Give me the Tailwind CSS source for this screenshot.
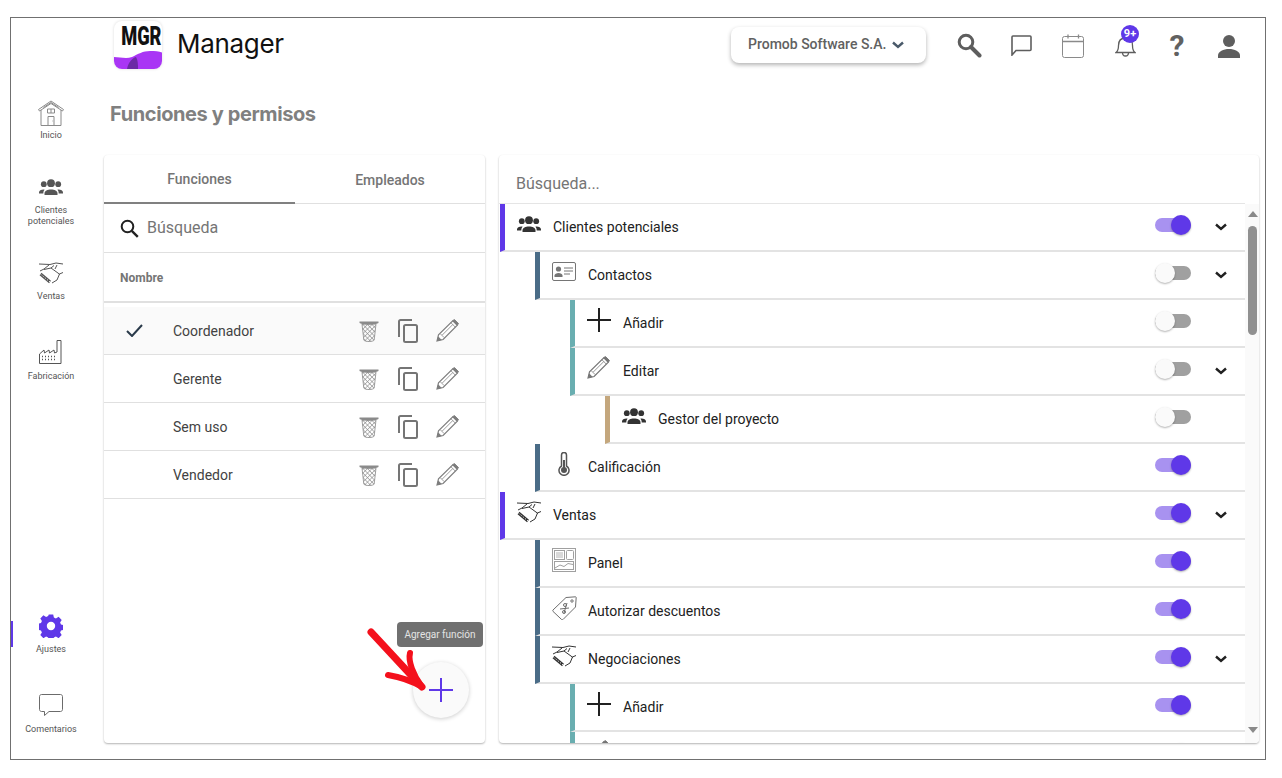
<!DOCTYPE html>
<html lang="es">
<head>
  <meta charset="UTF-8" />
  <title>Manager</title>
  <script src="https://cdn.jsdelivr.net/npm/@tailwindcss/browser@4"></script>
</head>
<body class="bg-white font-['Roboto',sans-serif]">

  <!-- iconos compartidos -->
  <svg class="absolute w-0 h-0">
    <defs>
      <pattern id="mesh" width="3.2" height="3.2" patternUnits="userSpaceOnUse" patternTransform="rotate(45)">
        <path d="M0 0h3.2v3.2" fill="none" stroke="#8a8a8a" stroke-width="1.1"/>
      </pattern>
    </defs>
    <symbol id="i-group" viewBox="0 0 24 16">
      <circle cx="12" cy="4.2" r="3.9" fill="currentColor"/>
      <circle cx="4.8" cy="5.2" r="2.9" fill="currentColor"/>
      <circle cx="19.2" cy="5.2" r="2.9" fill="currentColor"/>
      <path d="M5.5 16v-1.6c0-2.6 3-4 6.5-4s6.500 1.400 6.500 4V16z" fill="currentColor"/>
      <path d="M0 14.500v-.9c0-1.900 2-3 4.600-3 .6 0 .9.100.9.100-.8.900-1.200 2-1.200 3.200v.6zM24 14.500v-.9c0-1.900-2-3-4.600-3-.6 0-.9.100-.9.100.8.900 1.200 2 1.200 3.200v.6z" fill="currentColor"/>
    </symbol>
    <symbol id="i-hands" viewBox="0 0 24 22">
      <g fill="none" stroke="currentColor" stroke-width="1">
        <path d="M0 2 L11 2.500 L17 1 L24 2"/>
        <path d="M10 3 L5 7 L1 9"/>
        <path d="M5 7.500 L12 6 L15 3.500"/>
        <path d="M12 6 L21 12.500"/>
        <path d="M24 10.500 L20.500 12 L18 18 L13 21"/>
        <path d="M18 3 L16 7"/>
      </g>
      <path d="M1.500 12 L11 20" fill="none" stroke="currentColor" stroke-width="3"/>
      <path d="M1.500 12 L11 20" fill="none" stroke="#fff" stroke-width="1" stroke-dasharray="1.200 1.600"/>
    </symbol>
    <symbol id="i-pencil" viewBox="0 0 24 24">
      <path d="M1 23l1.600-6.400L17.500 1.800l4.700 4.700L7.400 21.400z" fill="#fff" stroke="currentColor" stroke-width="1.200"/>
      <path d="M17.500 1.800 19.200 .5 23.500 4.800 22.200 6.500z" fill="currentColor" stroke="currentColor"/>
      <path d="M4.600 15.500l3.900 3.900M15.500 3.800l4.700 4.700M6.500 16.800 17.500 5.800" fill="none" stroke="currentColor" stroke-width=".8"/>
      <path d="M1 23l1.200-5 3.800 3.800z" fill="currentColor"/>
    </symbol>
    <symbol id="i-plus" viewBox="0 0 24 24">
      <path d="M12 0v24M0 12h24" fill="none" stroke="currentColor" stroke-width="2"/>
    </symbol>
    <symbol id="i-trash" viewBox="0 0 20 22">
      <path d="M3 4l1.800 16c.1.800 2.500 1.500 5.200 1.500s5.100-.7 5.200-1.500L17 4z" fill="url(#mesh)" stroke="#8a8a8a" stroke-width=".8"/>
      <path d="M.5 1.500h19V3c-2 1.200-5.500 1.700-9.500 1.700S2.500 4.200.5 3z" fill="currentColor"/>
    </symbol>
    <symbol id="i-copy" viewBox="0 0 20 24">
      <path d="M1 18V2.500C1 1.600 1.600 1 2.500 1H14" fill="none" stroke="currentColor" stroke-width="2"/>
      <rect x="6" y="6" width="13" height="17" rx="1.500" fill="none" stroke="currentColor" stroke-width="2"/>
    </symbol>
    <symbol id="i-chev" viewBox="0 0 12 8">
      <path d="M1 1.500l5 4.500 5-4.500" fill="none" stroke="currentColor" stroke-width="2.400"/>
    </symbol>
  </svg>

  <div class="ml-[10px] mt-[17px] w-[1256px] h-[743px] border border-[#707070] flex overflow-hidden">

    <!-- barra lateral -->
    <aside class="w-[93px] shrink-0 pr-[13px] pt-[80px] pb-[24px] flex flex-col text-[9px] leading-[11px] text-[#555] text-center">
      <a class="flex flex-col items-center mb-[31px]">
        <span class="h-[30px] flex items-center text-[#8a8a8a]">
          <svg width="26" height="26" viewBox="0 0 26 26" fill="none" stroke="currentColor" stroke-width="1">
            <path d="M.5 9.500 13 1l12.500 8.500-1 1.500L13 3.500 1.500 11zM3 10v15.500h20V10"/>
            <path d="M5.500 7.500 13 2.500l7.500 5M9.500 9h7v4h-7zM13 9v4M10 25.500V16.500h6v9M14.500 21h.6"/>
          </svg>
        </span>
        <span class="mt-[2px]">Inicio</span>
      </a>
      <a class="flex flex-col items-center mb-[31px]">
        <span class="h-[30px] flex items-center text-[#555]"><svg width="24" height="16"><use href="#i-group"/></svg></span>
        <span class="mt-[3px]">Clientes<br/>potenciales</span>
      </a>
      <a class="flex flex-col items-center mb-[35px]">
        <span class="h-[30px] flex items-center text-[#555]"><svg width="24" height="22"><use href="#i-hands"/></svg></span>
        <span class="mt-[3px]">Ventas</span>
      </a>
      <a class="flex flex-col items-center">
        <span class="h-[30px] flex items-center text-[#555]">
          <svg width="24" height="24" viewBox="0 0 24 24" fill="none" stroke="currentColor" stroke-width="1">
            <path d="M.5 23.500V14l4.500-4 .5 3 4.500-3 .5 3 4.500-3 .5 3 2.500-1V.5h4v23z"/>
            <path d="M3 16.500h1M6 16.500h1M9 16.500h1M12 16.500h1M15 16.500h1M3 19.500h1M6 19.500h1M9 19.500h1M12 19.500h1M15 19.500h1" stroke-width="1.400"/>
          </svg>
        </span>
        <span class="mt-[4px]">Fabricación</span>
      </a>

      <a class="relative flex flex-col items-center mt-auto mb-[35px]">
        <span class="absolute left-0 top-[10px] w-[2px] h-[26px] bg-[#5f38e8]"></span>
        <span class="h-[30px] flex items-center text-[#5f38e8]">
          <svg width="24" height="24" viewBox="0 0 24 24" fill="currentColor">
            <path fill-rule="evenodd" d="M9.800 .5h4.400l.7 3 2 .9 2.700-1.600 3.100 3.100-1.600 2.700.9 2 3 .7v4.400l-3 .7-.9 2 1.600 2.700-3.100 3.100-2.700-1.600-2 .9-.7 3H9.800l-.7-3-2-.9-2.700 1.600-3.100-3.100 1.600-2.700-.9-2-3-.7V9.800l3-.7.9-2L1.300 4.400l3.100-3.100 2.700 1.600 2-.9zM12 7.800a4.200 4.200 0 1 0 0 8.400 4.200 4.200 0 0 0 0-8.400z"/>
          </svg>
        </span>
        <span class="mt-[3px]">Ajustes</span>
      </a>
      <a class="flex flex-col items-center">
        <span class="h-[30px] flex items-center text-[#6b6b6b]">
          <svg width="24" height="22" viewBox="0 0 24 22" fill="#fff" stroke="currentColor" stroke-width="1">
            <path d="M2.500.5h19c1.100 0 2 .9 2 2v13c0 1.100-.9 2-2 2H10l-4.500 4v-4h-3c-1.100 0-2-.9-2-2v-13c0-1.100.9-2 2-2z"/>
          </svg>
        </span>
        <span class="mt-[4px]">Comentarios</span>
      </a>
    </aside>

    <!-- contenido -->
    <div class="flex-1 min-w-0 flex flex-col pr-[6px] pb-[16px]">

      <header class="h-[54px] shrink-0 flex pl-[10px] pt-[3px]">
        <div class="relative w-[48px] h-[48px] rounded-[8px] bg-white shadow-[0_0_3px_rgba(0,0,0,0.15)] overflow-hidden">
          <div class="pr-[5px] text-center text-[26px] leading-[26px] mt-[2px] font-black text-[#111] scale-x-[0.7]">MGR</div>
          <svg class="absolute left-0 bottom-0" width="48" height="18" viewBox="0 0 48 18">
            <path d="M0 6c6 0 12 2 18 0 6-3 11-6 18-6 5 0 9 0 12 1.500V18H0z" fill="#a935f5"/>
            <path d="M13 18c1-6 5-11 9-12 2 3 2 8 2 12z" fill="#6b2aa5"/>
          </svg>
        </div>
        <div class="ml-[15px] mt-[3px] text-[26px] leading-[40px] text-[#111] font-['Inter',sans-serif] tracking-[-0.3px]">Manager</div>

        <div class="ml-auto mt-[6px] w-[195px] h-[36px] pb-[2px] rounded-[8px] bg-white shadow-[0_2px_4px_rgba(0,0,0,0.3)] flex items-center pl-[17px] text-[#616161] font-medium text-[14px]">
          <span>Promob Software S.A.</span>
          <svg class="ml-[6px] mt-[2px] text-[#4a5a6a]" width="12" height="8"><use href="#i-chev"/></svg>
        </div>

        <div class="flex items-start mt-[12px] pr-[18px]">
          <svg class="ml-[31px]" width="25" height="25" viewBox="0 0 25 25" fill="none">
            <circle cx="9" cy="9" r="6.800" stroke="#5e5e5e" stroke-width="3"/>
            <path d="M14 14l8.500 8.500" stroke="#5e5e5e" stroke-width="4" stroke-linecap="round"/>
          </svg>
          <svg class="ml-[29px] mt-[2px]" width="21" height="21" viewBox="0 0 21 21" fill="none">
            <path d="M2 1h17c.6 0 1 .4 1 1v12.500c0 .6-.4 1-1 1H5L1 20V2c0-.6.4-1 1-1z" stroke="#5e5e5e" stroke-width="1.600"/>
          </svg>
          <svg class="ml-[30px] mt-[1px]" width="23" height="24" viewBox="0 0 23 24" fill="none" stroke="#8a8a8a">
            <rect x=".5" y="2.500" width="21" height="21" rx="2"/>
            <path d="M.5 7.500h21M6 .5v4M16.500 .5v4" stroke-width="1.300"/>
          </svg>
          <div class="relative ml-[30px] w-[21px] h-[24px]">
            <svg class="mt-[1px]" width="21" height="23" viewBox="0 0 21 23" fill="none" stroke="#5e5e5e" stroke-width="1.300">
              <path d="M1 18.500c2-1.500 2.500-3.500 2.500-7C3.500 6.500 6.500 4 10.500 4s7 2.500 7 7.500c0 3.500.5 5.500 2.500 7z"/>
              <path d="M7.500 18.500c0 2.500 1.300 3.500 3 3.500s3-1 3-3.500"/>
            </svg>
            <span class="absolute left-[6px] top-[-8px] w-[18px] h-[18px] rounded-full bg-[#5f38e8] text-white text-[11px] leading-[17px] font-bold text-center">9+</span>
          </div>
          <span class="ml-[33px] w-[16px] text-[#616161] text-[30px] leading-[26px] font-bold text-center">?</span>
          <svg class="ml-[32px] mt-[1px]" width="24" height="24" viewBox="0 0 24 24" fill="#5e5e5e">
            <circle cx="12" cy="7" r="6"/>
            <path d="M1 24v-2.500C1 17.500 6.500 15 12 15s11 2.500 11 6.500V24z"/>
          </svg>
        </div>
      </header>

      <div class="h-[83px] shrink-0 flex items-center pl-[6px]">
        <h1 class="text-[20px] font-bold text-[#808080] font-['Inter',sans-serif] tracking-[-0.4px]">Funciones y permisos</h1>
      </div>

      <div class="flex-1 min-h-0 flex gap-[14px]">

        <!-- funciones -->
        <section class="relative w-[381px] rounded-[4px] bg-white shadow-[0_1px_2px_rgba(0,0,0,0.3)] flex flex-col">
          <div class="flex h-[49px] border-b border-[#e0e0e0] text-[14px] font-medium text-[#757575]">
            <div class="w-[191px] h-[49px] pt-[2px] border-b-2 border-[#808080] flex items-center justify-center">Funciones</div>
            <div class="flex-1 pt-[2px] flex items-center justify-center">Empleados</div>
          </div>
          <div class="h-[49px] border-b border-[#e0e0e0] flex items-center pl-[16px] text-[16px] text-[#757575]">
            <svg width="19" height="19" viewBox="0 0 19 19" fill="none">
              <circle cx="7.500" cy="7.500" r="5.800" stroke="#212121" stroke-width="2"/>
              <path d="M11.800 11.800l6 6" stroke="#212121" stroke-width="2.400"/>
            </svg>
            <span class="ml-[8px]">Búsqueda</span>
          </div>
          <div class="h-[50px] pt-[2px] border-b-2 border-[#e0e0e0] flex items-center pl-[16px] text-[12px] font-bold text-[#757575]">Nombre</div>

          <div class="mt-[4px] text-[14px] text-[#424242]" id="roles"></div>

          <span class="absolute right-[2px] top-[467px] w-[86px] h-[25px] rounded-[4px] bg-[#707070] text-[#e4e4e4] text-[10px] leading-[25px] text-center">Agregar función</span>
          <button class="absolute left-[309px] top-[507px] w-[56px] h-[56px] rounded-full bg-[#fafafa] shadow-[0_1px_4px_rgba(0,0,0,0.2)] flex items-center justify-center text-[#5f38e8]">
            <svg width="24" height="24"><use href="#i-plus"/></svg>
          </button>
          <svg class="absolute left-[262px] top-[472px]" width="66" height="66" viewBox="0 0 66 66" fill="none" stroke="#f4101c" stroke-linecap="round" stroke-linejoin="round">
            <path d="M5 5 L56 60" stroke-width="7"/>
            <path d="M44 26c-2 8 3 22 12 34-10-6-22-10-34-12" stroke-width="6"/>
          </svg>
        </section>

        <!-- permisos -->
        <section class="flex-1 min-w-0 rounded-[4px] bg-white shadow-[0_1px_2px_rgba(0,0,0,0.3)] flex flex-col overflow-hidden">
          <div class="h-[49px] shrink-0 flex items-end pb-[7px] pl-[17px] text-[16px] text-[#757575] mr-[14px] border-b border-[#e5e5e5]">Búsqueda...</div>
          <div class="flex-1 min-h-0 flex">
            <div class="flex-1 min-w-0 overflow-hidden text-[14px] text-[#212121]" id="tree"></div>
            <div class="relative w-[14px] shrink-0 bg-[#fafafa]">
              <span class="absolute left-[3px] top-[7px] w-0 h-0 border-x-[5px] border-x-transparent border-b-[6px] border-b-[#8a8a8a]"></span>
              <span class="absolute left-[3px] top-[22px] w-[9px] h-[109px] rounded-full bg-[#909090]"></span>
              <span class="absolute left-[3px] top-[523px] w-0 h-0 border-x-[5px] border-x-transparent border-t-[6px] border-t-[#8a8a8a]"></span>
            </div>
          </div>
        </section>
      </div>
    </div>
  </div>

  <script>
    // filas de funciones
    const roles = [
      { name: "Coordenador", active: true },
      { name: "Gerente" },
      { name: "Sem uso" },
      { name: "Vendedor" },
    ];
    document.getElementById("roles").innerHTML = roles.map(r => `
      <div class="h-[48px] flex items-center border-b border-[#e0e0e0] ${r.active ? "bg-[#fafafa]" : "bg-white"}">
        <span class="w-[69px] pl-[22px] flex">
          ${r.active ? `<svg width="17" height="13" viewBox="0 0 17 13" fill="none"><path d="M1 7l5 5L16 1" stroke="#2a3a4a" stroke-width="2"/></svg>` : ""}
        </span>
        <span class="flex-1 mt-[2px]">${r.name}</span>
        <svg class="text-[#8a8a8a]" width="20" height="22"><use href="#i-trash"/></svg>
        <svg class="ml-[19px] text-[#757575]" width="20" height="24"><use href="#i-copy"/></svg>
        <svg class="ml-[18px] mr-[26px] text-[#7d7d7d]" width="23" height="23"><use href="#i-pencil"/></svg>
      </div>`).join("");

    const icons = {
      group: `<svg class="text-[#333]" width="24" height="16"><use href="#i-group"/></svg>`,
      hands: `<svg class="text-[#333]" width="24" height="22"><use href="#i-hands"/></svg>`,
      plus: `<svg class="text-[#212121]" width="24" height="24"><use href="#i-plus"/></svg>`,
      pencil: `<svg class="text-[#757575]" width="23" height="23"><use href="#i-pencil"/></svg>`,
      card: `<svg width="24" height="20" viewBox="0 0 24 20" fill="none"><rect x=".5" y=".5" width="23" height="18" rx="1.500" stroke="#757575"/><circle cx="6.500" cy="7" r="2.600" fill="#757575"/><path d="M2.500 15v-1.500c0-1.500 2-2.500 4-2.500s4 1 4 2.500V15z" fill="#757575"/><path d="M12 6h9M12 9h9M12 12h6" stroke="#757575"/></svg>`,
      thermo: `<svg class="ml-[5px]" width="14" height="24" viewBox="0 0 14 24" fill="none"><path d="M4.500 14V3a2.500 2.500 0 0 1 5 0v11a5 5 0 1 1-5 0z" stroke="#555" stroke-width="1.500"/><circle cx="7" cy="18" r="3" fill="#555"/><path d="M7 8v8" stroke="#555" stroke-width="2"/></svg>`,
      panel: `<svg width="24" height="24" viewBox="0 0 24 24" fill="none" stroke="#a0a0a0"><rect x=".5" y=".5" width="23" height="23"/><rect x="2.500" y="2.500" width="10" height="9"/><rect x="14.500" y="2.500" width="7" height="9" rx="1"/><rect x="2.500" y="13.500" width="19" height="8"/><path d="M3 20l5-3 4 1.500 4-3 5 1"/><path d="M4 5h7M4 7h7M4 9h7" stroke-width=".8"/></svg>`,
      tag: `<svg width="25" height="24" viewBox="0 0 25 24" fill="none" stroke="#6e6e6e"><path d="M1 14 14 1.500 23.500 .8c.4 0 .7.300.7.700l-.7 9.500L11 23.500c-.4.400-1 .4-1.400 0L1 15.400c-.4-.4-.4-1 0-1.400z"/><circle cx="20" cy="5" r="1.200"/><circle cx="13" cy="9" r="1.500"/><circle cx="12" cy="16" r="1.500"/><path d="M8 13l9-1M15 7l-3 10"/></svg>`,
    };

    // bar: 1 morado, 2 azul, 3 verde, 4 marrón
    const levels = {
      1: "ml-[1px] border-l-[#5f38e8]",
      2: "ml-[36px] border-l-[#4a6c87]",
      3: "ml-[71px] border-l-[#69aeb0]",
      4: "ml-[106px] border-l-[#c4a77d]",
    };
    const rows = [
      [1, "group", "Clientes potenciales", true, true],
      [2, "card", "Contactos", false, true],
      [3, "plus", "Añadir", false, false],
      [3, "pencil", "Editar", false, true],
      [4, "group", "Gestor del proyecto", false, false],
      [2, "thermo", "Calificación", true, false],
      [1, "hands", "Ventas", true, true],
      [2, "panel", "Panel", true, false],
      [2, "tag", "Autorizar descuentos", true, false],
      [2, "hands", "Negociaciones", true, true],
      [3, "plus", "Añadir", true, false],
      [3, "pencil", "", true, true], // queda cortada por el borde
    ];
    document.getElementById("tree").innerHTML = rows.map(([level, icon, label, on, open]) => `
      <div class="h-[48px] ${levels[level]} border-l-[5px] border-b-2 border-b-[#e3e3e3] flex items-center">
        <span class="w-[48px] pl-[12px] flex items-center justify-start -mt-[7px]">${icons[icon]}</span>
        <span class="flex-1">${label}</span>
        <span class="relative w-[36px] h-[14px] rounded-full -mt-[5px] ${on ? "bg-[#a892f0]" : "bg-[#a0a0a0]"}">
          <span class="absolute top-[-3px] w-[20px] h-[20px] rounded-full shadow-[0_1px_2px_rgba(0,0,0,0.3)] ${on ? "right-0 bg-[#5f38e8]" : "left-0 bg-[#fafafa]"}"></span>
        </span>
        <span class="w-[54px] pl-[24px] flex">
          ${open ? `<svg class="text-[#212121]" width="12" height="8"><use href="#i-chev"/></svg>` : ""}
        </span>
      </div>`).join("");
  </script>
</body>
</html>
